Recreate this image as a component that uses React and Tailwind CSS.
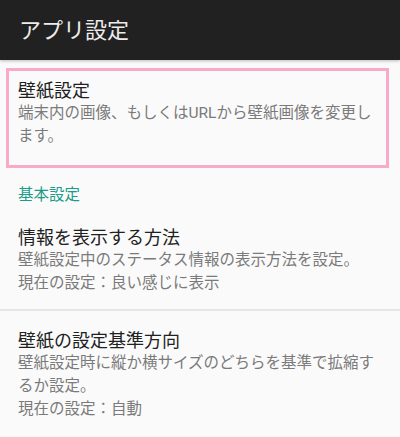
import React from 'react';

const font = { fontFamily: 'Roboto, "Noto Sans CJK JP", sans-serif' };

const PrefItem = ({ title, lines, className = '' }) => (
  <div className={className}>
    <div className="text-[18px] leading-[23px] text-[#212121]">{title}</div>
    {lines.map((line, i) => (
      <div key={i} className="text-[15.5px] leading-[23px] text-[#7a7a7a]">
        {line}
      </div>
    ))}
  </div>
);

const App = () => {
  return (
    <div className="w-[400px] h-[437px] overflow-hidden bg-[#fafafa]" style={font}>
      {/* Toolbar */}
      <div className="relative z-10 h-[60px] bg-[#212121] flex items-center pl-[19px] shadow-[0_1px_3px_rgba(0,0,0,0.25)]">
        <span className="text-[22px] text-[#ececec]">アプリ設定</span>
      </div>

      {/* Highlighted item */}
      <div className="mt-[8px] ml-[6px] w-[383px] border-[3px] border-[#f8aac8] pt-[8px] pb-[17px] pl-[9px] pr-[6px]">
        <PrefItem
          title="壁紙設定"
          lines={['端末内の画像、もしくはURLから壁紙画像を変更します。']}
        />
      </div>

      {/* Category */}
      <div className="mt-[15.5px] pl-[18px] text-[15.5px] leading-[23px] text-[#1b9c88]">
        基本設定
      </div>

      <PrefItem
        className="pt-[19px] pb-[14.5px] pl-[18px] pr-[20px]"
        title="情報を表示する方法"
        lines={['壁紙設定中のステータス情報の表示方法を設定。', '現在の設定：良い感じに表示']}
      />

      <div className="h-[2px] bg-[#e6e6e6]" />

      <PrefItem
        className="pt-[17.5px] pl-[18px] pr-[20px]"
        title="壁紙の設定基準方向"
        lines={['壁紙設定時に縦か横サイズのどちらを基準で拡縮するか設定。', '現在の設定：自動']}
      />
    </div>
  );
};

export default App;
